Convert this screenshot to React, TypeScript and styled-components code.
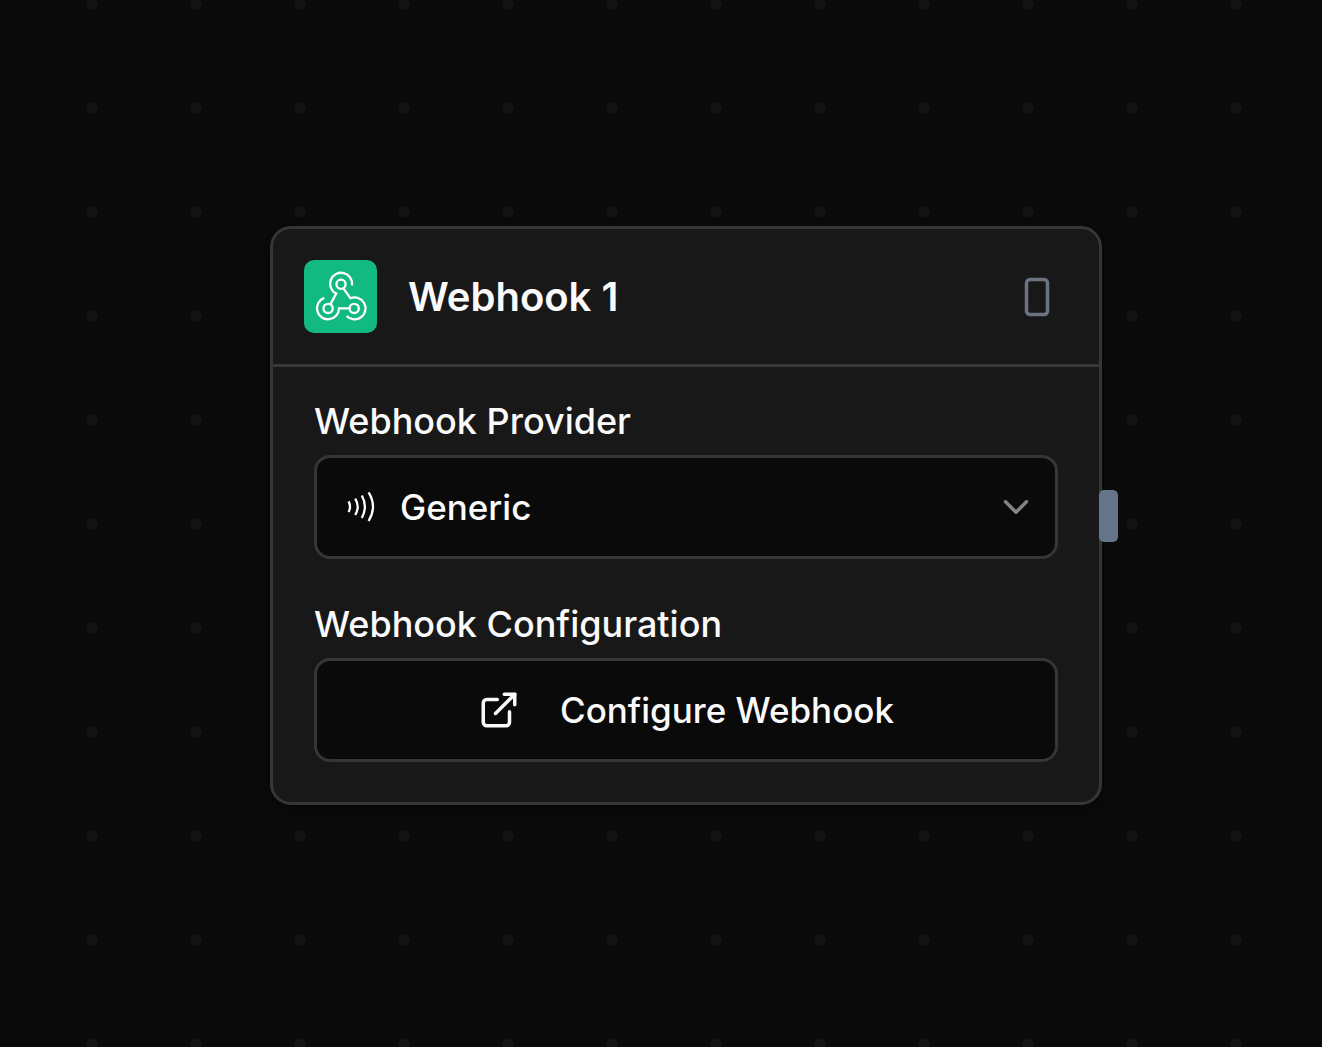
import React from 'react';
import styled, { createGlobalStyle } from 'styled-components';
import { ChevronDown, ExternalLink, RectangleVertical } from 'lucide-react';

const color = {
  canvas: '#0a0a0a',
  dot: '#141414',
  card: '#181818',
  border: '#363636',
  text: '#fafafa',
  accent: '#12b981',
  muted: '#6b7280',
  handle: '#64748b',
};

const GlobalStyle = createGlobalStyle`
  *, *::before, *::after { box-sizing: border-box; }
  body {
    margin: 0;
    background: ${color.canvas};
    color: ${color.text};
    font-family: Inter, "Liberation Sans", sans-serif;
    -webkit-font-smoothing: antialiased;
  }
`;

const Canvas = styled.main`
  position: relative;
  min-height: 100vh;
  overflow: hidden;
  background-color: ${color.canvas};
  background-image: radial-gradient(circle, ${color.dot} 5px, transparent 6px);
  background-size: 104px 104px;
  background-position: 40px 56px;
`;

const Node = styled.article<{ $x: number; $y: number }>`
  position: absolute;
  left: ${(p) => p.$x}px;
  top: ${(p) => p.$y}px;
  width: 832px;
  background: ${color.card};
  border: 3px solid ${color.border};
  border-radius: 21px;
  box-shadow: 0 3px 8px rgba(0, 0, 0, 0.3);
`;

const NodeHeader = styled.header`
  display: flex;
  align-items: center;
  gap: 31px;
  padding: 31px 41px 31px 31px;
  border-bottom: 3px solid ${color.border};
`;

const Badge = styled.span`
  display: flex;
  width: 73px;
  height: 73px;
  border-radius: 10px;
  background: ${color.accent};
`;

const Title = styled.h2`
  flex: 1;
  margin: 0;
  font-size: 40px;
  line-height: 48px;
  font-weight: 600;
`;

const IconButton = styled.button`
  display: flex;
  padding: 0;
  border: 0;
  background: none;
  color: ${color.muted};
  cursor: pointer;
`;

const NodeBody = styled.div`
  display: flex;
  flex-direction: column;
  gap: 47px;
  padding: 36px 41px 40px;
`;

const Field = styled.div`
  display: flex;
  flex-direction: column;
  gap: 16px;
`;

const Label = styled.label`
  font-size: 36px;
  line-height: 36px;
  font-weight: 500;
`;

const SelectBox = styled.div`
  display: grid;
  align-items: center;

  > * {
    grid-area: 1 / 1;
  }
  > svg {
    pointer-events: none;
    z-index: 1;
  }
  > svg:first-child {
    margin-left: 31px;
  }
  > svg:last-child {
    justify-self: end;
    margin-right: 21px;
    opacity: 0.5;
  }
`;

const Select = styled.select`
  appearance: none;
  width: 100%;
  height: 104px;
  padding: 0 80px 0 83px;
  border: 3px solid ${color.border};
  border-radius: 16px;
  background: ${color.canvas};
  color: ${color.text};
  font-family: inherit;
  font-size: 35px;
  font-weight: 450;
`;

const ConfigureButton = styled.button`
  display: flex;
  align-items: center;
  justify-content: center;
  gap: 40px;
  height: 104px;
  padding: 0 31px;
  border: 3px solid ${color.border};
  border-radius: 16px;
  background: ${color.canvas};
  color: ${color.text};
  font-family: inherit;
  font-size: 35px;
  font-weight: 450;
  cursor: pointer;
`;

const Handle = styled.span`
  position: absolute;
  right: -19px;
  top: calc(50% - 26px);
  width: 19px;
  height: 52px;
  border-radius: 5px;
  background: ${color.handle};
`;

const WebhookIcon = () => (
  <svg width="73" height="73" viewBox="0 0 73 73" fill="none" stroke="#fff" strokeWidth="2.3" aria-hidden="true">
    <circle cx="37" cy="24.3" r="4.6" />
    <circle cx="24.1" cy="48.4" r="4.6" />
    <circle cx="50.2" cy="48.4" r="4.6" />
    <path d="M48 25.3A11 11 0 1 0 32.2 33.6L26.6 44" />
    <path d="M39.4 28.3L46.4 38.2A11 11 0 1 1 42.6 56" />
    <path d="M20.3 37.9A11 11 0 1 0 35 48.4H45.6" />
  </svg>
);

const WavesIcon = () => (
  <svg width="31" height="31" viewBox="0 1 31 31" fill="none" stroke="#fff" strokeWidth="2.3" aria-hidden="true">
    <path d="M3.6 10.4Q6.4 15.6 3.6 21" />
    <path d="M10.2 7.6Q15.2 15.6 10.2 24" />
    <path d="M16.8 4.5Q23 15.6 16.8 27" />
    <path d="M23.6 1.4Q32.4 15.6 23.6 30" />
  </svg>
);

export default function App() {
  return (
    <>
      <GlobalStyle />
      <Canvas>
        <Node $x={270} $y={226}>
          <NodeHeader>
            <Badge>
              <WebhookIcon />
            </Badge>
            <Title>Webhook 1</Title>
            <IconButton type="button" aria-label="Toggle orientation">
              <RectangleVertical size={42} />
            </IconButton>
          </NodeHeader>
          <NodeBody>
            <Field>
              <Label htmlFor="provider">Webhook Provider</Label>
              <SelectBox>
                <WavesIcon />
                <Select id="provider" defaultValue="generic">
                  <option value="generic">Generic</option>
                </Select>
                <ChevronDown size={42} />
              </SelectBox>
            </Field>
            <Field>
              <Label htmlFor="configure">Webhook Configuration</Label>
              <ConfigureButton id="configure" type="button">
                <ExternalLink size={42} />
                Configure Webhook
              </ConfigureButton>
            </Field>
          </NodeBody>
          <Handle />
        </Node>
      </Canvas>
    </>
  );
}
